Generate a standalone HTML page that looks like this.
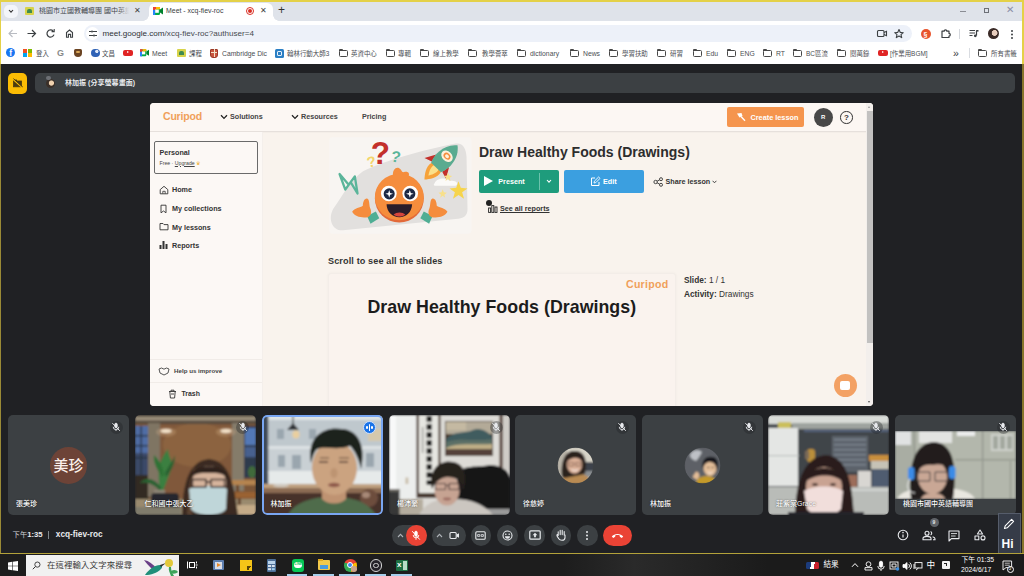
<!DOCTYPE html>
<html lang="zh-Hant">
<head>
<meta charset="utf-8">
<title>Meet - xcq-fiev-roc</title>
<style>
*{box-sizing:border-box;margin:0;padding:0}
html,body{width:1024px;height:576px;overflow:hidden;background:#202124}
body{position:relative;font-family:"Liberation Sans","Noto Sans CJK TC",sans-serif;color:#202124;-webkit-font-smoothing:antialiased}
.abs{position:absolute}
#tabstrip{left:0;top:0;width:1024px;height:21px;background:#dfe3ea}
#toolbar{left:0;top:21px;width:1024px;height:24px;background:#fff}
#bookmarks{left:0;top:45px;width:1024px;height:19px;background:#fff}
#meet{left:0;top:64px;width:1024px;height:490px;background:#202124}
#taskbar{left:0;top:554px;width:1024px;height:22px;background:#1c1c1c}
.yb{background:#e4d148}
.t{position:absolute;white-space:nowrap;line-height:1}
.bm{position:absolute;top:49px;font-size:6.8px;color:#4a4d52;white-space:nowrap;line-height:10px}
.folder{position:absolute;top:49.5px;width:9px;height:7px;border:1px solid #474747;border-radius:1.5px}
.folder:before{content:"";position:absolute;left:-1px;top:-2px;width:4px;height:2px;background:#474747;border-radius:1px 1px 0 0}
.nm{font-size:7px;color:#fff;font-weight:500;text-shadow:0 0 1.5px rgba(0,0,0,0.7)}
.cb{top:525px;width:20.5px;height:20.5px;border-radius:50%;background:#3c4043}
</style>
</head>
<body>
<!-- ===== browser chrome ===== -->
<div id="tabstrip" class="abs"></div>
<div id="toolbar" class="abs"></div>
<div id="bookmarks" class="abs"></div>
<div id="meet" class="abs"></div>
<div id="taskbar" class="abs"></div>


<!-- tab strip -->
<div class="abs" style="left:4px;top:5px;width:14px;height:13px;border-radius:5px;background:#f3f5f9"></div>
<svg class="abs" style="left:8px;top:9px" width="6" height="5" viewBox="0 0 6 5"><path d="M1 1 L3 3.2 L5 1" fill="none" stroke="#333" stroke-width="1.1"/></svg>
<div class="abs" style="left:25px;top:7px;width:9px;height:8px;background:#d7d34a;border-radius:1px"></div>
<div class="abs" style="left:27px;top:9px;width:5px;height:4px;background:#3f8a4f;border-radius:2px 2px 0 0"></div>
<div class="t" style="left:39px;top:7.3px;font-size:7px;color:#45484e;width:92px;overflow:hidden">桃園市立國教輔導團 國中英語科</div>
<div class="abs" style="left:118px;top:4px;width:14px;height:14px;background:linear-gradient(90deg,rgba(223,227,234,0),#dfe3ea 80%)"></div>
<div class="t" style="left:133.5px;top:6.5px;font-size:8px;color:#444">✕</div>
<div class="abs" style="left:149px;top:3px;width:124px;height:18px;background:#fff;border-radius:6px 6px 0 0"></div>
<div class="abs" style="left:143px;top:15px;width:6px;height:6px;background:radial-gradient(circle at 0 0,rgba(255,255,255,0) 5.5px,#fff 6px)"></div>
<div class="abs" style="left:273px;top:15px;width:6px;height:6px;background:radial-gradient(circle at 100% 0,rgba(255,255,255,0) 5.5px,#fff 6px)"></div>
<svg class="abs" style="left:153px;top:7px" width="10" height="8" viewBox="0 0 10 8"><rect x="0" y="0" width="7" height="8" rx="1.2" fill="#00ac47"/><rect x="0" y="0" width="3" height="3" fill="#ea4335"/><rect x="0" y="3" width="2.2" height="5" fill="#2684fc"/><rect x="2.2" y="2.4" width="3.6" height="3.4" fill="#fff"/><path d="M7 2.5 L10 0.6 V7.4 L7 5.5Z" fill="#00832d"/><rect x="3" y="0" width="4" height="2.4" fill="#ffba00"/></svg>
<div class="t" style="left:166px;top:7.5px;font-size:6.95px;color:#3b3e44">Meet - xcq-fiev-roc</div>
<div class="abs" style="left:246px;top:7px;width:8px;height:8px;border-radius:50%;border:1px solid #d93025"></div>
<div class="abs" style="left:248px;top:9px;width:4px;height:4px;border-radius:50%;background:#d93025"></div>
<div class="t" style="left:259.5px;top:6.5px;font-size:8px;color:#444">✕</div>
<div class="t" style="left:278px;top:4px;font-size:12px;color:#333">+</div>
<!-- window controls -->
<div class="abs" style="left:960px;top:11px;width:6px;height:1px;background:#8a8d94"></div>
<div class="abs" style="left:984px;top:8px;width:5px;height:5px;border:1px solid #6d7077"></div>
<div class="t" style="left:1006px;top:5px;font-size:10px;color:#8b8fa8">✕</div>

<!-- toolbar -->
<svg class="abs" style="left:6px;top:27px" width="140" height="13" viewBox="0 0 140 13">
 <g fill="none" stroke="#b9bcc2" stroke-width="1.1"><path d="M3 6.5 H11 M6.5 3 L3 6.5 L6.5 10"/></g>
 <g fill="none" stroke="#3c4043" stroke-width="1.2"><path d="M21.5 6.5 H29.5 M26 3 L29.5 6.5 L26 10"/>
 <path d="M47.2 4 A3.6 3.6 0 1 0 48 7.6"/><path d="M48.2 2 V4.6 H45.6" stroke-width="1.1"/>
 <path d="M60.5 10.3 V5.6 L63.5 3 L66.5 5.6 V10.3 H64.6 V7.4 H62.4 V10.3 Z" stroke-width="1.1"/></g>
</svg>
<div class="abs" style="left:84px;top:25px;width:828px;height:17px;border-radius:9px;background:#edf1f9"></div>
<div class="abs" style="left:86px;top:27px;width:13px;height:13px;border-radius:50%;background:#fff"></div>
<svg class="abs" style="left:89px;top:30px" width="8" height="7" viewBox="0 0 8 7"><g stroke="#3c4043" stroke-width="1.2" fill="none"><path d="M0 1.5 H2 M4 1.5 H8 M0 5.5 H4 M6 5.5 H8"/></g><circle cx="3" cy="1.5" r="1" fill="#3c4043"/><circle cx="5" cy="5.5" r="1" fill="#3c4043"/></svg>
<div class="t" style="left:102.5px;top:30.1px;font-size:8.1px;color:#2f3136">meet.google.com<span style="color:#474a50">/xcq-fiev-roc?authuser=4</span></div>
<svg class="abs" style="left:876px;top:28px" width="30" height="11" viewBox="0 0 30 11"><g fill="none" stroke="#3c4043" stroke-width="1.1"><rect x="1.5" y="2.5" width="6.5" height="6" rx="1"/><path d="M8 4.6 L10.5 3.3 V7.7 L8 6.4"/><path d="M23 1.6 L24.3 4.4 L27.3 4.7 L25 6.6 L25.7 9.6 L23 8 L20.3 9.6 L21 6.6 L18.7 4.7 L21.7 4.4 Z" stroke-linejoin="round"/></g></svg>
<div class="abs" style="left:921px;top:29px;width:10px;height:10px;border-radius:50%;background:#e8532c"></div>
<div class="t" style="left:923.5px;top:30.5px;font-size:7px;color:#fff;font-weight:bold">§</div>
<svg class="abs" style="left:940px;top:28px" width="11" height="11" viewBox="0 0 11 11"><path d="M2 3.2 H4.2 A1.3 1.3 0 1 1 6.8 3.2 H9 V5.4 A1.3 1.3 0 1 1 9 8 V9.5 H2 Z" fill="none" stroke="#3c4043" stroke-width="1.2" stroke-linejoin="round"/></svg>
<div class="abs" style="left:959px;top:29px;width:1px;height:10px;background:#d5d8dd"></div>
<svg class="abs" style="left:969px;top:29px" width="10" height="9" viewBox="0 0 10 9"><g stroke="#3c4043" stroke-width="1.2" fill="none"><path d="M0.5 1.5 H6 M0.5 4 H6 M0.5 6.5 H3.5 M7.5 1.2 V6.5"/></g><circle cx="6.3" cy="6.8" r="1.4" fill="#3c4043"/><path d="M7.5 1 H9.5 V2.6 H7.5Z" fill="#3c4043"/></svg>
<div class="abs" style="left:987.5px;top:28px;width:11px;height:11px;border-radius:50%;background:radial-gradient(circle at 60% 45%,#e8cdbd 0 2.6px,#3a2a26 3.2px)"></div>
<div class="abs" style="left:1011px;top:29.5px;width:2px;height:2px;border-radius:50%;background:#3c4043;box-shadow:0 3.5px 0 #3c4043,0 7px 0 #3c4043"></div>

<!-- bookmarks -->
<div class="abs" style="left:6px;top:48px;width:9px;height:9px;border-radius:50%;background:#1877f2"></div><div class="t" style="left:9.2px;top:49px;font-size:8.5px;font-weight:bold;color:#fff">f</div>
<div class="abs" style="left:23px;top:48.5px;width:4px;height:4px;background:#f25022"></div><div class="abs" style="left:27.5px;top:48.5px;width:4px;height:4px;background:#7fba00"></div><div class="abs" style="left:23px;top:53px;width:4px;height:4px;background:#00a4ef"></div><div class="abs" style="left:27.5px;top:53px;width:4px;height:4px;background:#ffb900"></div><div class="bm" style="left:36px;font-size:6.45px">登入</div>
<div class="t" style="left:57px;top:48.5px;font-size:9px;font-weight:bold;color:#8a8a8a">G</div>
<div class="abs" style="left:74px;top:49px;width:8px;height:8px;background:#6b4423;border-radius:1.5px 1.5px 4px 4px"></div><div class="abs" style="left:76px;top:51px;width:4px;height:2px;background:#d8a657;border-radius:1px"></div>
<div class="abs" style="left:91px;top:48.5px;width:8.5px;height:8.5px;border-radius:50%;background:radial-gradient(circle at 65% 30%,#dfe9f7 0 1.3px,#2f62b5 2px)"></div><div class="bm" style="left:102px;font-size:6.45px">文昌</div>
<div class="abs" style="left:123px;top:49.5px;width:9.5px;height:6.5px;border-radius:2px;background:#e02424"></div><div class="abs" style="left:126.7px;top:51.2px;width:0;height:0;border-left:2.6px solid #fff;border-top:1.6px solid transparent;border-bottom:1.6px solid transparent"></div>
<svg class="abs" style="left:140px;top:49px" width="9" height="7.5" viewBox="0 0 10 8"><rect x="0" y="0" width="7" height="8" rx="1.2" fill="#00ac47"/><rect x="0" y="0" width="3" height="3" fill="#ea4335"/><rect x="0" y="3" width="2.2" height="5" fill="#2684fc"/><rect x="2.2" y="2.4" width="3.6" height="3.4" fill="#fff"/><path d="M7 2.5 L10 0.6 V7.4 L7 5.5Z" fill="#00832d"/><rect x="3" y="0" width="4" height="2.4" fill="#ffba00"/></svg><div class="bm" style="left:152px">Meet</div>
<div class="abs" style="left:177px;top:49px;width:9px;height:8px;background:#d7d34a;border-radius:1px"></div><div class="abs" style="left:179px;top:51px;width:5px;height:4px;background:#3f8a4f;border-radius:2px 2px 0 0"></div><div class="bm" style="left:189px;font-size:6.45px">課程</div>
<div class="abs" style="left:210px;top:48.5px;width:8px;height:9px;background:#c8553d;border-radius:1px 1px 3px 3px;border:1px solid #9c3a28"></div><div class="abs" style="left:213.5px;top:49px;width:1px;height:8px;background:#f2e2c9"></div><div class="abs" style="left:211px;top:52px;width:6px;height:1px;background:#f2e2c9"></div><div class="bm" style="left:222px">Cambridge Dic</div>
<div class="abs" style="left:275px;top:48.5px;width:8.5px;height:9px;background:#2b7fc4;border-radius:1.5px"></div><div class="abs" style="left:277px;top:50.5px;width:4.5px;height:5px;border:1px solid #e4effa;border-radius:1px"></div><div class="bm" style="left:287px;font-size:6.45px">翰林行動大師3</div>
<div class="folder" style="left:339px"></div><div class="bm" style="left:351px;font-size:6.45px">英資中心</div>
<div class="folder" style="left:386px"></div><div class="bm" style="left:398px;font-size:6.45px">專輯</div>
<div class="folder" style="left:420px"></div><div class="bm" style="left:433px;font-size:6.45px">線上教學</div>
<div class="folder" style="left:468px"></div><div class="bm" style="left:482px;font-size:6.45px">教學薈萃</div>
<div class="folder" style="left:517px"></div><div class="bm" style="left:530px">dictionary</div>
<div class="folder" style="left:570px"></div><div class="bm" style="left:583px">News</div>
<div class="folder" style="left:609px"></div><div class="bm" style="left:622px;font-size:6.45px">學習扶助</div>
<div class="folder" style="left:657px"></div><div class="bm" style="left:670px;font-size:6.45px">研習</div>
<div class="folder" style="left:693px"></div><div class="bm" style="left:706px">Edu</div>
<div class="folder" style="left:727px"></div><div class="bm" style="left:740px">ENG</div>
<div class="folder" style="left:763px"></div><div class="bm" style="left:776px">RT</div>
<div class="folder" style="left:793px"></div><div class="bm" style="left:806px;font-size:6.45px">BC區流</div>
<div class="folder" style="left:837px"></div><div class="bm" style="left:850px;font-size:6.45px">閱萬錄</div>
<div class="abs" style="left:878px;top:49.5px;width:9.5px;height:6.5px;border-radius:2px;background:#e02424"></div><div class="abs" style="left:881.7px;top:51.2px;width:0;height:0;border-left:2.6px solid #fff;border-top:1.6px solid transparent;border-bottom:1.6px solid transparent"></div><div class="bm" style="left:890px;font-size:6.45px">[作業用BGM]</div>
<div class="folder" style="left:978px"></div><div class="bm" style="left:991px;font-size:6.45px">所有書籤</div>
<div class="t" style="left:953px;top:47.5px;font-size:10.5px;color:#3c4043">»</div>
<div class="abs" style="left:969px;top:48px;width:1px;height:10px;background:#d9dce1"></div>

<!-- ===== Meet top banner ===== -->
<div class="abs" style="left:8px;top:73px;width:19px;height:21px;border-radius:5px;background:#fbbc04"></div>
<svg class="abs" style="left:12px;top:78px" width="11" height="11" viewBox="0 0 11 11"><rect x="1.5" y="3" width="8" height="5.8" fill="#4a3a10" stroke="#4a3a10" stroke-width="0.8"/><path d="M1.2 3 H5 V1.6 H1.2Z" fill="#4a3a10"/><path d="M0.6 1 L10.4 9.8" stroke="#fbbc04" stroke-width="1.1"/><path d="M1.4 0.6 L10.8 9" stroke="#4a3a10" stroke-width="0.9"/></svg>
<div class="abs" style="left:35px;top:73px;width:980px;height:20px;border-radius:5px;background:#3c4043"></div>
<div class="abs" style="left:46px;top:79px;width:9px;height:9px;border-radius:50%;background:radial-gradient(circle at 60% 45%,#f0d2b0 0 2.2px,#3a2f28 3px)"></div>
<div class="abs" style="left:46px;top:76px;width:5px;height:4px;background:#6d7075;border-radius:2px"></div>
<div class="t" style="left:65px;top:79.2px;font-size:7.05px;font-weight:bold;color:#e8eaed">林加振 (分享螢幕畫面)</div>

<!-- ===== Shared screen: Curipod ===== -->
<div id="share" class="abs" style="left:150px;top:103px;width:723px;height:303px;background:#f9f3ed;border-radius:4px;overflow:hidden">
 <!-- coordinates inside are page coords minus (150,103) -->
 <div class="abs" style="left:0;top:0;width:723px;height:29.3px;background:#fcf7f3;border-bottom:1px solid #e6e0dc;box-shadow:0 0.5px 1.5px rgba(0,0,0,0.06)"></div>
 <div class="abs" style="left:0;top:29px;width:113.2px;height:274px;background:#fcf8f5;border-right:1px solid #f4efeb"></div>
 <!-- logo -->
 <div class="t" style="left:13px;top:8px;font-size:10.5px;font-weight:bold;color:#f0a05a;letter-spacing:-0.2px">Curipod</div>
 <!-- nav -->
 <svg class="abs" style="left:70px;top:11px" width="8" height="6" viewBox="0 0 8 6"><path d="M1 1.2 L4 4.4 L7 1.2" fill="none" stroke="#222" stroke-width="1.3"/></svg>
 <div class="t" style="left:80px;top:10px;font-size:7.2px;font-weight:bold;color:#444">Solutions</div>
 <svg class="abs" style="left:140.5px;top:11px" width="8" height="6" viewBox="0 0 8 6"><path d="M1 1.2 L4 4.4 L7 1.2" fill="none" stroke="#222" stroke-width="1.3"/></svg>
 <div class="t" style="left:151px;top:10px;font-size:7.2px;font-weight:bold;color:#444">Resources</div>
 <div class="t" style="left:212px;top:10px;font-size:7.2px;font-weight:bold;color:#444">Pricing</div>
 <!-- create lesson -->
 <div class="abs" style="left:577px;top:4px;width:77px;height:20px;border-radius:2px;background:#f5954e"></div>
 <svg class="abs" style="left:586px;top:9px" width="10" height="10" viewBox="0 0 10 10"><path d="M1 1.5 L5.5 1 L6.5 4 L3.5 5.5 Z" fill="#fff"/><path d="M5 4.5 L9 8.8" stroke="#fff" stroke-width="1.3"/></svg>
 <div class="t" style="left:600.5px;top:10.5px;font-size:7.3px;font-weight:bold;color:#fff">Create lesson</div>
 <div class="abs" style="left:664px;top:5px;width:19px;height:19px;border-radius:50%;background:#484848"></div>
 <div class="t" style="left:671px;top:10.6px;font-size:6px;font-weight:bold;color:#fff">R</div>
 <div class="abs" style="left:690px;top:8px;width:12.5px;height:12.5px;border-radius:50%;border:1px solid #333"></div>
 <div class="t" style="left:694px;top:10.5px;font-size:8px;font-weight:bold;color:#333">?</div>
 <!-- scrollbar -->
 <div class="abs" style="left:716px;top:0;width:7px;height:303px;background:#f3efec"></div>
 <div class="abs" style="left:716.5px;top:8px;width:6px;height:232px;background:#c2c1c0"></div>
 <div class="abs" style="left:718px;top:3px;width:0;height:0;border-left:1.8px solid transparent;border-right:1.8px solid transparent;border-bottom:2.2px solid #999"></div>
 <div class="abs" style="left:718px;top:298px;width:0;height:0;border-left:1.8px solid transparent;border-right:1.8px solid transparent;border-top:2.2px solid #555"></div>

 <!-- sidebar -->
 <div class="abs" style="left:4px;top:37.5px;width:104px;height:33px;border:1px solid #6a6a6a;border-radius:2px"></div>
 <div class="t" style="left:9.5px;top:45.5px;font-size:7.2px;font-weight:bold;color:#333">Personal</div>
 <div class="t" style="left:9.5px;top:57.5px;font-size:5.2px;color:#444">Free · <span style="text-decoration:underline">Upgrade</span> <span style="color:#f0b23a">♛</span></div>
 <svg class="abs" style="left:8.5px;top:81.5px" width="10" height="10" viewBox="0 0 10 10"><path d="M1.2 4.6 L5 1.3 L8.8 4.6 V8.8 H1.2 Z" fill="none" stroke="#333" stroke-width="0.9" stroke-linejoin="round"/><path d="M3.8 8.6 V6.3 H6.2 V8.6" fill="none" stroke="#333" stroke-width="0.8"/></svg>
 <div class="t" style="left:22px;top:83px;font-size:7.2px;font-weight:bold;color:#333">Home</div>
 <svg class="abs" style="left:9px;top:100.5px" width="9" height="10" viewBox="0 0 9 10"><path d="M2 1.2 H7 V8.8 L4.5 7 L2 8.8 Z" fill="none" stroke="#333" stroke-width="0.9" stroke-linejoin="round"/></svg>
 <div class="t" style="left:22px;top:102px;font-size:7.2px;font-weight:bold;color:#333">My collections</div>
 <svg class="abs" style="left:8.5px;top:119px" width="10" height="9" viewBox="0 0 10 9"><path d="M1 1.5 H4 L5 2.6 H9 V7.8 H1 Z" fill="none" stroke="#333" stroke-width="0.9" stroke-linejoin="round"/></svg>
 <div class="t" style="left:22px;top:120.5px;font-size:7.2px;font-weight:bold;color:#333">My lessons</div>
 <svg class="abs" style="left:9px;top:137px" width="9" height="10" viewBox="0 0 9 10"><g fill="#333"><rect x="0.5" y="5" width="2" height="4"/><rect x="3.5" y="1" width="2" height="8"/><rect x="6.5" y="4" width="2" height="5"/></g></svg>
 <div class="t" style="left:22px;top:139px;font-size:7.2px;font-weight:bold;color:#333">Reports</div>
 <div class="abs" style="left:0;top:256px;width:112px;height:1px;background:#f1ece8"></div>
 <div class="abs" style="left:0;top:279px;width:112px;height:1px;background:#f1ece8"></div>
 <svg class="abs" style="left:8px;top:264px" width="12" height="9" viewBox="0 0 12 9"><path d="M1 2 L3.5 1 L6 2.2 L8.5 1 L11 2 L10 6 L6 8 L2 6 Z" fill="none" stroke="#444" stroke-width="0.9" stroke-linejoin="round"/></svg>
 <div class="t" style="left:24px;top:265.3px;font-size:6.2px;font-weight:bold;color:#444">Help us improve</div>
 <svg class="abs" style="left:18px;top:286px" width="9" height="10" viewBox="0 0 9 10"><path d="M1 2.5 H8 M3 2.5 V1.2 H6 V2.5 M1.8 2.5 L2.4 9 H6.6 L7.2 2.5 M3 5 H6" fill="none" stroke="#333" stroke-width="0.9"/></svg>
 <div class="t" style="left:31.5px;top:288.3px;font-size:6.9px;font-weight:bold;color:#333">Trash</div>


 <!-- mascot illustration (real "?" glyphs are text) -->
 <svg class="abs" style="left:172px;top:29px" width="160" height="110" viewBox="0 0 838 576">
  <rect x="38" y="28" width="745" height="505" rx="18" fill="#f8f5f2"/>
  <path d="M60 400 C110 330 150 250 215 205 C330 150 520 95 700 60 C740 55 755 90 757 130 L762 400 C764 440 740 452 700 456 L110 515 C50 518 30 450 60 400Z" fill="#e2e0de"/>
  <!-- lightning -->
  <path d="M92 220 L122 302 L150 262 L186 322 L172 232 L140 276 Z" fill="none" stroke="#5bb59a" stroke-width="12" stroke-linejoin="round"/>
  <!-- question marks -->
  <text x="255" y="165" font-family="Liberation Sans, sans-serif" font-weight="bold" font-size="165" fill="#c3302b">?</text>
  <text x="236" y="185" font-family="Liberation Sans, sans-serif" font-weight="bold" font-size="78" fill="#f3d56b" transform="rotate(-12 250 160)">?</text>
  <text x="362" y="158" font-family="Liberation Sans, sans-serif" font-weight="bold" font-size="82" fill="#5bb59a" transform="rotate(10 385 130)">?</text>
  <!-- rocket -->
  <g transform="translate(14 8) rotate(44 630 130) translate(630 130) scale(1.12 0.86) translate(-630 -130)">
   <path d="M600 205 C590 250 615 285 630 310 C645 285 670 250 660 205Z" fill="#f6a23a"/>
   <path d="M615 205 C610 235 622 258 630 275 C638 258 650 235 645 205Z" fill="#fbe08a"/>
   <path d="M588 150 L560 215 L596 200Z M672 150 L700 215 L664 200Z" fill="#c3302b"/>
   <path d="M630 20 C680 70 680 160 662 208 H598 C580 160 580 70 630 20Z" fill="#5aab90"/>
   <circle cx="630" cy="112" r="30" fill="#fdf0dc"/>
   <circle cx="630" cy="112" r="14" fill="none" stroke="#f58d3d" stroke-width="8"/>
  </g>
  <!-- cloud & stars -->
  <path d="M590 268 C600 240 650 236 668 256 C700 250 720 268 700 282 H600 C585 282 582 274 590 268Z" fill="#fbfaf8"/>
  <path d="M715 258 L727 292 L762 296 L734 316 L744 350 L715 330 L686 350 L696 316 L668 296 L703 292Z" fill="#f6d44c"/>
  <path d="M660 212 L666 228 L682 230 L669 240 L673 256 L660 246 L647 256 L651 240 L638 230 L654 228Z" fill="#f8e08a"/>
  <path d="M632 300 L638 316 L654 318 L641 328 L645 344 L632 334 L619 344 L623 328 L610 318 L626 316Z" fill="#f8e08a"/>
  <!-- hands -->
  <path d="M236 440 L282 416 L300 452 L254 480 Z" fill="#4fae94"/>
  <path d="M158 418 C170 396 200 398 214 386 C214 366 222 346 236 348 C250 352 246 380 252 398 C262 420 258 440 240 446 C210 452 170 444 158 418Z" fill="#f58d3d"/>
  <path d="M579 440 L533 416 L515 452 L561 480 Z" fill="#4fae94"/>
  <path d="M657 418 C645 396 615 398 601 386 C601 366 593 346 579 348 C565 352 569 380 563 398 C553 420 557 440 575 446 C605 452 645 444 657 418Z" fill="#f58d3d"/>
  <!-- head -->
  <path d="M372 228 C368 200 388 180 404 190 C418 196 416 214 430 210 C452 204 462 218 452 234 Z" fill="#f58d3d"/>
  <ellipse cx="405" cy="348" rx="128" ry="126" fill="#e36a3a"/>
  <ellipse cx="405" cy="340" rx="128" ry="122" fill="#f58d3d"/>
  <circle cx="350" cy="322" r="41" fill="#fff"/><circle cx="462" cy="322" r="41" fill="#fff"/>
  <circle cx="352" cy="324" r="29" fill="#1e2944"/><circle cx="460" cy="324" r="29" fill="#1e2944"/>
  <path d="M352 304 L357 319 L372 324 L357 329 L352 344 L347 329 L332 324 L347 319Z M460 304 L465 319 L480 324 L465 329 L460 344 L455 329 L440 324 L455 319Z" fill="#fff"/>
  <path d="M338 378 H472 C470 420 440 446 405 446 C370 446 340 420 338 378Z" fill="#2a1d2a"/>
  <path d="M375 432 C390 418 422 418 436 432 C420 446 392 446 375 432Z" fill="#d6453c"/>
 </svg>
 <!-- lesson header -->
 <div class="t" style="left:329px;top:41.6px;font-size:14px;font-weight:bold;color:#2d2d2d">Draw Healthy Foods (Drawings)</div>
 <div class="abs" style="left:329px;top:67px;width:80px;height:22.5px;border-radius:2px;background:#1e9c7c"></div>
 <div class="abs" style="left:388.5px;top:69.5px;width:1px;height:17px;background:#6cc2ac"></div>
 <div class="abs" style="left:334px;top:72.9px;width:0;height:0;border-left:9.5px solid #fff;border-top:5.4px solid transparent;border-bottom:5.4px solid transparent"></div>
 <div class="t" style="left:348.3px;top:74.5px;font-size:7.2px;font-weight:bold;color:#fff">Present</div>
 <svg class="abs" style="left:396px;top:76px" width="6" height="5" viewBox="0 0 6 5"><path d="M1 1 L3 3.2 L5 1" fill="none" stroke="#fff" stroke-width="1.1"/></svg>
 <div class="abs" style="left:414px;top:67px;width:80px;height:22.5px;border-radius:2px;background:#3b9fe0"></div>
 <svg class="abs" style="left:440px;top:73px" width="11" height="11" viewBox="0 0 11 11"><path d="M5 2 H1.5 V9.5 H9 V6" fill="none" stroke="#fff" stroke-width="1"/><path d="M4 7 L4.4 5.2 L8.6 1 L10 2.4 L5.8 6.6 Z" fill="none" stroke="#fff" stroke-width="0.9"/></svg>
 <div class="t" style="left:453px;top:74.5px;font-size:7.2px;font-weight:bold;color:#fff">Edit</div>
 <svg class="abs" style="left:503px;top:73.5px" width="11" height="10" viewBox="0 0 11 10"><g fill="none" stroke="#333" stroke-width="0.9"><circle cx="2.6" cy="5" r="1.7"/><circle cx="8" cy="2.2" r="1.5"/><circle cx="8" cy="7.8" r="1.5"/><path d="M4.1 4.2 L6.6 2.9 M4.1 5.8 L6.6 7.1"/></g></svg>
 <div class="t" style="left:515.5px;top:74.5px;font-size:7.2px;font-weight:bold;color:#333">Share lesson</div>
 <svg class="abs" style="left:562.3px;top:76.5px" width="5" height="4" viewBox="0 0 5 4"><path d="M0.6 0.8 L2.5 2.8 L4.4 0.8" fill="none" stroke="#333" stroke-width="0.9"/></svg>
 <div class="abs" style="left:336px;top:96.5px;width:6px;height:6px;border-radius:50%;background:#222"></div>
 <svg class="abs" style="left:338px;top:102px" width="10" height="8" viewBox="0 0 10 8"><g fill="none" stroke="#222" stroke-width="0.9"><rect x="0.6" y="3" width="2" height="4.4"/><rect x="3.8" y="0.6" width="2" height="6.8"/><rect x="7" y="2" width="2" height="5.4"/></g></svg>
 <div class="t" style="left:350px;top:102.3px;font-size:7.2px;font-weight:bold;color:#333;text-decoration:underline">See all reports</div>

 <!-- slides -->
 <div class="t" style="left:178px;top:153.8px;font-size:9.1px;letter-spacing:0.12px;font-weight:bold;color:#333">Scroll to see all the slides</div>
 <div class="abs" style="left:178px;top:170px;width:348px;height:140px;background:#faf3ee;border:1px solid #f3ede8;border-radius:3px;box-shadow:0 0 3px rgba(0,0,0,0.04)"></div>
 <div class="t" style="left:217.5px;top:196px;font-size:17.8px;letter-spacing:0.03px;font-weight:bold;color:#1c1c1c">Draw Healthy Foods (Drawings)</div>
 <div class="t" style="left:476px;top:175.5px;font-size:10.6px;font-weight:bold;color:#f0a05a;letter-spacing:0.25px">Curipod</div>
 <div class="t" style="left:534px;top:173.2px;font-size:8.3px;color:#333"><b>Slide:</b> 1 / 1</div>
 <div class="t" style="left:534px;top:187px;font-size:8.3px;color:#333"><b>Activity:</b> Drawings</div>
 <!-- chat bubble -->
 <div class="abs" style="left:683.5px;top:271px;width:23px;height:23px;border-radius:50%;background:#f3a164"></div>
 <div class="abs" style="left:690px;top:277.5px;width:10px;height:9px;border-radius:2px;background:#fff"></div>
</div>

<!-- ===== participants strip ===== -->
<svg width="0" height="0" style="position:absolute"><defs>
 <filter id="b1" x="-5%" y="-5%" width="110%" height="110%"><feGaussianBlur stdDeviation="0.9"/></filter>
 <filter id="b2" x="-5%" y="-5%" width="110%" height="110%"><feGaussianBlur stdDeviation="1.6"/></filter>
</defs></svg>

<!-- tile 1 -->
<div class="abs" style="left:8px;top:415px;width:121px;height:100px;border-radius:5px;background:#3c4043"></div>
<div class="abs" style="left:50px;top:447.3px;width:36.8px;height:36.8px;border-radius:50%;background:#6d4337"></div>
<div class="t" style="left:53.4px;top:458.3px;font-size:15px;font-weight:500;color:#fbefea">美珍</div>
<div class="t nm" style="left:16px;top:500.4px">張美珍</div>
<div class="abs" style="left:109.5px;top:420.5px;width:13px;height:13px;border-radius:50%;background:rgba(32,33,36,0.35)"></div><svg class="abs" style="left:111px;top:422px" width="10" height="10" viewBox="0 0 10 10"><g fill="none" stroke="#e8eaed" stroke-width="0.9"><rect x="3.8" y="1.2" width="2.4" height="4.6" rx="1.2" fill="#e8eaed"/><path d="M2.2 4.8 A2.8 2.8 0 0 0 7.8 4.8 M5 7.6 V9"/><path d="M1.4 1.2 L8.8 8.8" stroke-width="1"/></g></svg>

<!-- tile 2 : cafe -->
<svg class="abs" style="left:135px;top:415px;border-radius:5px" width="121" height="100" viewBox="0 0 121 100">
 <g filter="url(#b1)">
 <rect width="121" height="100" fill="#7c5638"/>
 <rect x="25" y="8" width="72" height="78" fill="#80583a"/>
 <ellipse cx="62" cy="30" rx="34" ry="22" fill="#8f6644" opacity="0.8"/>
 <rect x="0" y="0" width="121" height="9" fill="#6e6252"/>
 <rect x="0" y="2.5" width="121" height="2.2" fill="#a99d88"/>
 <rect x="0" y="7" width="121" height="1.6" fill="#4a4036"/>
 <rect x="0" y="11" width="13" height="50" fill="#4f6da4"/>
 <rect x="0" y="38" width="13" height="23" fill="#3b4a68"/>
 <rect x="0" y="20" width="13" height="1.4" fill="#27303f"/><rect x="0" y="30" width="13" height="1.4" fill="#27303f"/><rect x="0" y="42" width="13" height="1.4" fill="#27303f"/><rect x="5.5" y="11" width="1.4" height="50" fill="#27303f"/>
 <rect x="0" y="60" width="14" height="28" fill="#332c24"/>
 <rect x="13" y="8" width="12" height="74" fill="#7f7564"/>
 <rect x="97" y="8" width="12" height="68" fill="#857b6b"/>
 <rect x="109" y="11" width="12" height="52" fill="#2f3b4e"/>
 <rect x="110" y="13" width="11" height="17" fill="#5378b6"/>
 <rect x="110" y="32" width="11" height="10" fill="#46608e"/>
 <ellipse cx="117" cy="57" rx="4" ry="6" fill="#3f6b3a"/>
 <ellipse cx="31" cy="16" rx="5.5" ry="1.9" fill="#fff8e6"/><ellipse cx="91" cy="16" rx="5.5" ry="1.9" fill="#fff8e6"/>
 <ellipse cx="31" cy="17" rx="10" ry="4.5" fill="#d9b48a" opacity="0.3"/><ellipse cx="91" cy="17" rx="10" ry="4.5" fill="#d9b48a" opacity="0.3"/>
 <path d="M25 76 C23 58 22 48 33 34 C34 44 37 42 36 52 C38 50 33 64 28 76Z" fill="#3a7f40"/>
 <path d="M26 72 C18 62 10 62 5 68 C13 66 20 70 25 76Z" fill="#2a6231"/>
 <path d="M27 62 C22 54 18 48 19 40 C25 46 28 52 29 60Z" fill="#2f7236"/>
 <path d="M30 58 C34 50 38 46 40 40 C40 50 36 56 31 62Z" fill="#2a6231"/>
 <rect x="19" y="75" width="11" height="7" fill="#8e8576"/>
 <rect x="0" y="84" width="121" height="16" fill="#9a8a6e"/>
 <rect x="97" y="65" width="24" height="5" fill="#b5844f"/>
 <rect x="101" y="70" width="3" height="8" fill="#6a4526"/>
 <rect x="100" y="77" width="21" height="6" fill="#9a6232"/><rect x="103" y="83" width="2.6" height="9" fill="#5a3820"/>
 <rect x="98" y="90" width="23" height="10" fill="#c4ab88"/>
 <rect x="16" y="78" width="28" height="18" rx="4" fill="#25272e"/>
 <rect x="0" y="92" width="46" height="8" fill="#807c6c"/>
 <!-- person -->
 <path d="M47 100 C48 72 52 46 74 44 C96 46 99 72 103 100Z" fill="#3a2921"/>
 <path d="M52 100 C53 76 56 56 60 52 L57 100Z" fill="#5a4232"/>
 <ellipse cx="74" cy="68" rx="17" ry="17" fill="#d6b49c"/>
 <path d="M55 64 C55 47 93 47 93 64 C88 58 84 58 74 58 C64 58 60 58 55 64Z" fill="#2f201a"/>
 <path d="M54 74 C62 70 86 70 92 74 L91 94 C86 102 62 102 56 94Z" fill="#bfd6d9"/>
 <path d="M57.5 64.5 h13.5 v7.5 h-13.5z M76 64.5 h13.5 v7.5 h-13.5z M71 67 h5" fill="none" stroke="#2e2424" stroke-width="1.3"/>
 </g>
</svg>
<div class="t nm" style="left:144.5px;top:500.4px">仁和國中張大乙</div>
<div class="abs" style="left:236.0px;top:420.5px;width:13px;height:13px;border-radius:50%;background:rgba(32,33,36,0.35)"></div><svg class="abs" style="left:237.5px;top:422px" width="10" height="10" viewBox="0 0 10 10"><g fill="none" stroke="#e8eaed" stroke-width="0.9"><rect x="3.8" y="1.2" width="2.4" height="4.6" rx="1.2" fill="#e8eaed"/><path d="M2.2 4.8 A2.8 2.8 0 0 0 7.8 4.8 M5 7.6 V9"/><path d="M1.4 1.2 L8.8 8.8" stroke-width="1"/></g></svg>

<!-- tile 3 : speaker -->
<svg class="abs" style="left:262px;top:415px;border-radius:5px" width="121" height="100" viewBox="0 0 121 100">
 <g filter="url(#b1)">
 <rect width="121" height="100" fill="#d0d6d9"/>
 <rect x="0" y="0" width="6.5" height="100" fill="#3e4a58"/>
 <rect x="6.5" y="0" width="115" height="5" fill="#dfe4e6"/>
 <rect x="6.5" y="5" width="115" height="26" fill="#bfc8cd"/>
 <rect x="6.5" y="31" width="115" height="3" fill="#dde2e4"/>
 <rect x="6.5" y="34" width="115" height="24" fill="#c9d0d4"/>
 <rect x="6.5" y="56" width="115" height="13" fill="#e6eaea"/>
 <g fill="#9aa6ae"><rect x="15" y="14" width="7" height="10"/><rect x="47" y="14" width="7" height="10"/><rect x="16" y="40" width="7" height="12"/><rect x="30" y="40" width="9" height="14"/><rect x="104" y="38" width="8" height="14"/></g>
 <rect x="106" y="14" width="15" height="12" fill="#d5c8ac"/>
 <rect x="30.5" y="0" width="1" height="10" fill="#333"/><path d="M25 15 L31 8 L37 15Z" fill="#2e3134"/><ellipse cx="34" cy="19.5" rx="3.6" ry="4" fill="#e9cf9f"/>
 <rect x="0" y="69" width="121" height="4" fill="#bfa080"/>
 <rect x="0" y="73" width="121" height="5" fill="#8c6c52"/>
 <rect x="0" y="78" width="121" height="22" fill="#47332a"/>
 <ellipse cx="19" cy="70.5" rx="8" ry="1.8" fill="#cfc8be"/>
 <ellipse cx="107" cy="83" rx="9" ry="9" fill="#6d4d3e"/>
 <ellipse cx="104" cy="80" rx="4" ry="3" fill="#a88a78"/>
 <!-- person -->
 <path d="M26 100 C32 88 50 81 72 82 C96 82 108 90 114 100Z" fill="#4f6c4b"/>
 <path d="M60 68 H84 V84 C78 90 66 90 60 84Z" fill="#bf9372"/>
 <ellipse cx="72.5" cy="53" rx="22.5" ry="27" fill="#cba380"/>
 <path d="M49 48 C44 20 64 11 80 14 C97 15 104 32 99 54 C97 44 93 36 88 31 C76 36 60 30 54 35 C51 39 50 44 49 48Z" fill="#1d211e"/>
 <path d="M57 47 h9 M77 47 h9" stroke="#5b4536" stroke-width="1.6"/>
 <path d="M58 43 h9 M77 43 h10" stroke="#3a2c24" stroke-width="1.2" opacity="0.7"/>
 <ellipse cx="72" cy="70" rx="6" ry="2.2" fill="#8f5a4c"/>
 <ellipse cx="72" cy="58" rx="3.5" ry="5" fill="#bd9472"/>
 </g>
 <rect x="1" y="1" width="119" height="98" rx="4" fill="none" stroke="#79a6f2" stroke-width="2"/>
</svg>
<div class="abs" style="left:362.7px;top:421px;width:13px;height:13px;border-radius:50%;background:#1a73e8;border:0.6px solid #cfe0fb"></div>
<div class="abs" style="left:366px;top:425.5px;width:1.6px;height:3.6px;border-radius:1px;background:#fff"></div>
<div class="abs" style="left:368.5px;top:423.8px;width:1.6px;height:7px;border-radius:1px;background:#fff"></div>
<div class="abs" style="left:371px;top:425.5px;width:1.6px;height:3.6px;border-radius:1px;background:#fff"></div>
<div class="t nm" style="left:270.5px;top:500.4px">林加振</div>

<!-- tile 4 : office w/ calligraphy -->
<svg class="abs" style="left:389px;top:415px;border-radius:5px" width="121" height="100" viewBox="0 0 121 100">
 <g filter="url(#b1)">
 <rect width="121" height="100" fill="#dddbd7"/>
 <rect x="0" y="0" width="28" height="100" fill="#eceeed"/>
 <rect x="0" y="0" width="7" height="76" fill="#f8f9f9"/>
 <rect x="27.5" y="0" width="24" height="83" fill="#4a3a31"/>
 <rect x="29.8" y="0" width="19.6" height="78" fill="#e6e6e1"/>
 <g fill="#222"><rect x="37.5" y="1" width="5.5" height="6" rx="1"/><rect x="37.5" y="9" width="5.5" height="6" rx="1"/><rect x="37.5" y="17" width="5.5" height="6" rx="1"/><rect x="37.5" y="25" width="5.5" height="6" rx="1"/><rect x="37.5" y="33" width="5.5" height="6" rx="1"/><rect x="37.5" y="41" width="5.5" height="6" rx="1"/><rect x="37.5" y="49" width="5.5" height="6" rx="1"/><rect x="37.5" y="57" width="5.5" height="6" rx="1"/><rect x="37.5" y="65" width="5.5" height="5" rx="1"/></g>
 <rect x="33" y="12" width="1.2" height="26" fill="#8a8a86"/>
 <rect x="56" y="6" width="48" height="35" fill="#4d3c32"/>
 <rect x="57" y="7" width="46" height="12" fill="#b3aa98"/>
 <rect x="57" y="7" width="20" height="8" fill="#c4b9a2"/>
 <path d="M57 24 C66 15 76 19 84 15 C92 12 98 17 103 21 V32 H57Z" fill="#3f5b5e"/>
 <path d="M57 27 C70 22 90 27 103 24 V33 H57Z" fill="#5b6f66"/>
 <path d="M62 31 C74 28 92 30 103 29 V34 H57 V33Z" fill="#bfae86"/>
 <rect x="57" y="34" width="46" height="6" fill="#54423a"/>
 <rect x="110.5" y="0" width="3.2" height="56" fill="#56423a"/>
 <rect x="114" y="0" width="7" height="56" fill="#cfccc7"/>
 <rect x="16.5" y="62.5" width="2.8" height="6.5" fill="#c9bda8"/>
 <rect x="10" y="84" width="24" height="16" fill="#b5ad9f"/>
 <rect x="0" y="74" width="10.5" height="26" fill="#383838"/><rect x="0" y="74" width="10.5" height="2.6" fill="#6f6b64"/>
 <path d="M68 62 C70 48 92 53 100 50 C112 50 121 56 121 64 V95 H68Z" fill="#121318"/>
 <rect x="96" y="94" width="25" height="6" fill="#9a9a9a"/>
 <path d="M30 100 C36 88 48 83 62 84 C82 83 96 90 104 100Z" fill="#cbc6c0"/>
 <ellipse cx="58" cy="75" rx="12.5" ry="15.5" fill="#c6a392"/>
 <path d="M43 74 C38 52 54 44 64 47 C78 49 78 66 74 76 C72 66 68 62 58 62 C50 63 46 68 43 74Z" fill="#28201e"/>
 <path d="M46.5 68.5 h10 v6 h-10z M60 68.5 h10 v6 h-10z M56.5 70.5 h3.5" fill="none" stroke="#3f3230" stroke-width="1"/>
 <ellipse cx="58" cy="84" rx="4" ry="1.4" fill="#9c6a60"/>
 </g>
</svg>
<div class="t nm" style="left:397px;top:500.4px">楊沛縈</div>
<div class="abs" style="left:489.5px;top:420.5px;width:13px;height:13px;border-radius:50%;background:rgba(32,33,36,0.35)"></div><svg class="abs" style="left:491px;top:422px" width="10" height="10" viewBox="0 0 10 10"><g fill="none" stroke="#e8eaed" stroke-width="0.9"><rect x="3.8" y="1.2" width="2.4" height="4.6" rx="1.2" fill="#e8eaed"/><path d="M2.2 4.8 A2.8 2.8 0 0 0 7.8 4.8 M5 7.6 V9"/><path d="M1.4 1.2 L8.8 8.8" stroke-width="1"/></g></svg>

<!-- tile 5 -->
<div class="abs" style="left:515px;top:415px;width:121px;height:100px;border-radius:5px;background:#3c4043"></div>
<svg class="abs" style="left:557px;top:446.5px" width="37" height="37" viewBox="0 0 37 37"><defs><clipPath id="c5"><circle cx="18.5" cy="18.5" r="17.8"/></clipPath></defs><g clip-path="url(#c5)" filter="url(#b1)"><rect width="37" height="37" fill="#d8d4c8"/><rect x="0" y="0" width="10" height="37" fill="#b9b4a8"/><rect x="27" y="15" width="10" height="9" fill="#3c434b"/><rect x="27" y="24" width="10" height="6" fill="#8b8f92"/><path d="M3 37 C5 29 11 26 18 26 C28 26 33 30 35 37Z" fill="#b98b52"/><path d="M5 30 C3 10 11 3 18 4 C27 4 31 12 28 27 L8 31Z" fill="#2b201c"/><ellipse cx="17.5" cy="17.5" rx="7.6" ry="9.3" fill="#dcb198"/><path d="M9 16 C9 8 14 6 18 7 C23 7 26 10 26 15 C23 11 19 10 16 11 C12 12 10 14 9 16Z" fill="#2b201c"/><path d="M11.5 15.5 h5 v3.4 h-5z M18.8 15.5 h5 v3.4 h-5z" fill="none" stroke="#6b4a3c" stroke-width="0.7"/><path d="M14.5 22.5 C16.5 24 19 24 21 22.5" fill="none" stroke="#fff" stroke-width="0.9"/></g></svg>
<div class="t nm" style="left:523px;top:500.4px">徐慈婷</div>
<div class="abs" style="left:615.5px;top:420.5px;width:13px;height:13px;border-radius:50%;background:rgba(32,33,36,0.35)"></div><svg class="abs" style="left:617px;top:422px" width="10" height="10" viewBox="0 0 10 10"><g fill="none" stroke="#e8eaed" stroke-width="0.9"><rect x="3.8" y="1.2" width="2.4" height="4.6" rx="1.2" fill="#e8eaed"/><path d="M2.2 4.8 A2.8 2.8 0 0 0 7.8 4.8 M5 7.6 V9"/><path d="M1.4 1.2 L8.8 8.8" stroke-width="1"/></g></svg>

<!-- tile 6 -->
<div class="abs" style="left:642px;top:415px;width:121px;height:100px;border-radius:5px;background:#3c4043"></div>
<svg class="abs" style="left:684px;top:446.8px" width="37" height="37" viewBox="0 0 37 37"><defs><clipPath id="c6"><circle cx="18.5" cy="18.5" r="17.8"/></clipPath></defs><g clip-path="url(#c6)" filter="url(#b1)"><rect width="37" height="37" fill="#5d6166"/><path d="M6 8 C8 3 14 2 18 5 C16 9 14 12 12 14 C9 13 6 11 6 8Z" fill="#c9ccd0" opacity="0.9"/><path d="M12 37 C12 31 17 29 23 29 C29 29 33 32 33 37Z" fill="#c49a2c"/><ellipse cx="26" cy="21.5" rx="6.4" ry="7.6" fill="#e3bd98"/><path d="M18.5 22 C17 11 24 9 28 10 C34 10 35 17 33 23 C32 18 30 15 26 15 C22 15 20 17 18.500 22Z" fill="#17161a"/><path d="M23 20.5 h2.4 M27.6 20.5 h2.4" stroke="#2a1f1c" stroke-width="0.9"/><path d="M23.6 25 C25 26.4 27 26.4 28.6 25" fill="none" stroke="#fff" stroke-width="0.8"/><path d="M8.5 30 L12 24.5 L14.4 25.6 L15.6 29 L13 33Z" fill="#e3bd98"/></g></svg>
<div class="t nm" style="left:650px;top:500.4px">林加振</div>
<div class="abs" style="left:742.5px;top:420.5px;width:13px;height:13px;border-radius:50%;background:rgba(32,33,36,0.35)"></div><svg class="abs" style="left:744px;top:422px" width="10" height="10" viewBox="0 0 10 10"><g fill="none" stroke="#e8eaed" stroke-width="0.9"><rect x="3.8" y="1.2" width="2.4" height="4.6" rx="1.2" fill="#e8eaed"/><path d="M2.2 4.8 A2.8 2.8 0 0 0 7.8 4.8 M5 7.6 V9"/><path d="M1.4 1.2 L8.8 8.8" stroke-width="1"/></g></svg>

<!-- tile 7 : office w/ mask -->
<svg class="abs" style="left:768px;top:415px;border-radius:5px" width="121" height="100" viewBox="0 0 121 100">
 <g filter="url(#b1)">
 <rect width="121" height="100" fill="#40454b"/>
 <rect x="0" y="0" width="121" height="9" fill="#d9dcd8"/>
 <rect x="24" y="8" width="97" height="6" fill="#9ea39f"/>
 <rect x="10" y="7" width="13" height="7" fill="#cbbf5c"/>
 <rect x="0" y="13" width="30" height="58" fill="#e4e6e4"/>
 <rect x="0" y="40" width="31" height="1.2" fill="#bfc2c0"/>
 <rect x="31" y="14" width="90" height="58" fill="#3f444a"/><rect x="36" y="15" width="85" height="1.6" fill="#5b6c8a"/>
 <rect x="64" y="21" width="36" height="36" fill="#5b626b"/>
 <g fill="#7f8791"><rect x="66" y="24" width="32" height="1.4"/><rect x="66" y="29" width="32" height="1.4"/><rect x="66" y="34" width="32" height="1.4"/><rect x="66" y="39" width="32" height="1.4"/><rect x="66" y="44" width="32" height="1.4"/><rect x="66" y="49" width="32" height="1.4"/></g>
 <rect x="101" y="40" width="20" height="6" fill="#c98f3c"/><rect x="103" y="46" width="18" height="8" fill="#c6c2b6"/>
 <rect x="104" y="54" width="17" height="18" fill="#505c70"/>
 <rect x="90" y="56" width="13" height="16" fill="#d8d6d2"/>
 <rect x="80" y="60" width="9" height="12" fill="#9c6d5a"/>
 <rect x="0" y="72" width="121" height="28" fill="#b9bcb8"/>
 <rect x="80" y="74" width="41" height="2" fill="#d3d6d3"/>
 <rect x="39" y="34" width="8" height="13" rx="3" fill="#b98f3a"/><rect x="37" y="36" width="4" height="8" fill="#7a6a58"/>
 <!-- person -->
 <path d="M27 100 C28 70 34 42 58 40 C82 42 84 74 86 100Z" fill="#2a1f1c"/>
 <ellipse cx="56" cy="72" rx="18" ry="20" fill="#c9a392"/>
 <path d="M36 68 C36 48 76 48 76 68 C68 58 46 58 36 68Z" fill="#2a1f1c"/>
 <path d="M36 76 C46 70 66 70 75 76 L73 94 C66 102 46 102 39 94Z" fill="#f1dedb"/><ellipse cx="47" cy="69.5" rx="3" ry="1.3" fill="#3a2a26"/><ellipse cx="65" cy="69.5" rx="3" ry="1.3" fill="#3a2a26"/>
 <rect x="20" y="97" width="76" height="3" fill="#20242c"/>
 </g>
</svg>
<div class="t nm" style="left:776px;top:500.4px">莊紫棠Grace</div>
<div class="abs" style="left:869.5px;top:420.5px;width:13px;height:13px;border-radius:50%;background:rgba(32,33,36,0.35)"></div><svg class="abs" style="left:871px;top:422px" width="10" height="10" viewBox="0 0 10 10"><g fill="none" stroke="#e8eaed" stroke-width="0.9"><rect x="3.8" y="1.2" width="2.4" height="4.6" rx="1.2" fill="#e8eaed"/><path d="M2.2 4.8 A2.8 2.8 0 0 0 7.8 4.8 M5 7.6 V9"/><path d="M1.4 1.2 L8.8 8.8" stroke-width="1"/></g></svg>

<!-- tile 8 : letterboxed office -->
<div class="abs" style="left:895px;top:415px;width:121px;height:100px;border-radius:5px;background:#3c4043"></div>
<svg class="abs" style="left:895px;top:431px" width="121" height="68" viewBox="0 0 121 68">
 <g filter="url(#b1)">
 <rect width="121" height="68" fill="#b3b7ac"/>
 <rect x="0" y="0" width="19" height="68" fill="#a9ada3"/>
 <rect x="0" y="0" width="16" height="14" fill="#e0e2e2"/>
 <rect x="24" y="0" width="33" height="12" fill="#e3e4e2"/>
 <rect x="62" y="0" width="18" height="5" fill="#ecedec"/>
 <rect x="19" y="0" width="1.2" height="68" fill="#8b8f86"/>
 <rect x="87" y="0" width="1.2" height="68" fill="#8b8f86"/>
 <rect x="60" y="28" width="61" height="1.5" fill="#959a90"/>
 <rect x="96" y="3" width="22" height="17" fill="#cfd2cc"/><rect x="98" y="5" width="5" height="13" fill="#a3a89f"/><rect x="105" y="5" width="5" height="13" fill="#a3a89f"/><rect x="112" y="5" width="5" height="13" fill="#a3a89f"/>
 <rect x="115" y="30" width="1" height="38" fill="#8b8f86"/>
 <!-- person -->
 <path d="M2 68 C6 60 20 56 40 57 C60 56 76 60 80 68Z" fill="#e9e7e0"/>
 <path d="M16 68 C13 40 17 12 39 11 C60 12 62 40 58 68Z" fill="#241d1c"/>
 <ellipse cx="37.5" cy="46" rx="14.5" ry="17" fill="#c9a795"/><path d="M26 68 C28 60 48 60 50 68Z" fill="#c9a795"/>
 <path d="M20 44 C18 20 58 20 56 44 C52 34 46 32 38 34 C30 33 24 36 20 44Z" fill="#241d1c"/>
 <path d="M22 41 h13 v9 h-13z M40 41 h13 v9 h-13z" fill="none" stroke="#4c4444" stroke-width="1"/>
 <rect x="13" y="36" width="6.5" height="13" rx="3" fill="#3b8be6"/><rect x="54" y="35" width="6.5" height="13" rx="3" fill="#3b8be6"/>
 <path d="M15 48 C10 56 14 62 20 62" fill="none" stroke="#f2f2f2" stroke-width="1"/>
 </g>
</svg>
<div class="t nm" style="left:903px;top:500.4px">桃園市國中英語輔導團</div>
<div class="abs" style="left:996.5px;top:420.5px;width:13px;height:13px;border-radius:50%;background:rgba(32,33,36,0.35)"></div><svg class="abs" style="left:998px;top:422px" width="10" height="10" viewBox="0 0 10 10"><g fill="none" stroke="#e8eaed" stroke-width="0.9"><rect x="3.8" y="1.2" width="2.4" height="4.6" rx="1.2" fill="#e8eaed"/><path d="M2.2 4.8 A2.8 2.8 0 0 0 7.8 4.8 M5 7.6 V9"/><path d="M1.4 1.2 L8.8 8.8" stroke-width="1"/></g></svg>

<!-- ===== Meet bottom bar ===== -->
<div class="t" style="left:12.6px;top:531.4px;font-size:7.7px;font-weight:bold;color:#e8eaed"><span style="font-weight:normal;font-size:7.3px;color:#cfd1d4">下午</span>1:35</div>
<div class="abs" style="left:48.2px;top:530.8px;width:1px;height:8.5px;background:#80868b"></div>
<div class="t" style="left:55.8px;top:531.3px;font-size:8.25px;font-weight:bold;color:#e8eaed">xcq-fiev-roc</div>

<div class="abs" style="left:392px;top:525px;width:35px;height:20.5px;border-radius:10.5px;background:#3c4043"></div>
<svg class="abs" style="left:396.5px;top:532.5px" width="7" height="5" viewBox="0 0 7 5"><path d="M1 4 L3.5 1.4 L6 4" fill="none" stroke="#aeb2b7" stroke-width="1.1"/></svg>
<div class="abs" style="left:405.6px;top:524.8px;width:21px;height:21px;border-radius:50%;background:#ea4335"></div>
<svg class="abs" style="left:411px;top:530px" width="10" height="11" viewBox="0 0 10 11"><g fill="none" stroke="#fff" stroke-width="0.9"><rect x="3.8" y="1.2" width="2.4" height="5" rx="1.2" fill="#fff"/><path d="M2.2 5 A2.8 2.8 0 0 0 7.8 5 M5 8 V9.8"/><path d="M1.2 1.2 L8.8 9.6" stroke-width="1"/></g></svg>
<div class="abs" style="left:431.5px;top:525px;width:34px;height:20.5px;border-radius:10.5px;background:#3c4043"></div>
<svg class="abs" style="left:436px;top:532.5px" width="7" height="5" viewBox="0 0 7 5"><path d="M1 4 L3.5 1.4 L6 4" fill="none" stroke="#aeb2b7" stroke-width="1.1"/></svg>
<svg class="abs" style="left:449px;top:530.5px" width="11" height="9" viewBox="0 0 11 9"><rect x="1" y="1.5" width="6.2" height="6" rx="1" fill="none" stroke="#e8eaed" stroke-width="1.1"/><path d="M7.6 3.6 L10 2.2 V6.8 L7.6 5.4Z" fill="#e8eaed"/></svg>

<div class="abs cb" style="left:470.5px"></div>
<svg class="abs" style="left:475px;top:530.5px" width="11" height="9" viewBox="0 0 11 9"><rect x="0.8" y="0.8" width="9.4" height="7.4" rx="1" fill="none" stroke="#e8eaed" stroke-width="1.1"/><path d="M2.6 3.6 H4.8 V5.4 H2.6Z M6.2 3.6 H8.4 V5.4 H6.2Z" fill="none" stroke="#e8eaed" stroke-width="0.8"/></svg>
<div class="abs cb" style="left:497px"></div>
<svg class="abs" style="left:502px;top:529.5px" width="11" height="11" viewBox="0 0 11 11"><circle cx="5.5" cy="5.5" r="4.5" fill="none" stroke="#e8eaed" stroke-width="1.1"/><circle cx="3.8" cy="4.2" r="0.8" fill="#e8eaed"/><circle cx="7.2" cy="4.2" r="0.8" fill="#e8eaed"/><path d="M3 6.2 H8 A2.5 2.5 0 0 1 3 6.2Z" fill="#e8eaed"/></svg>
<div class="abs cb" style="left:524px"></div>
<svg class="abs" style="left:528.5px;top:530px" width="12" height="10" viewBox="0 0 12 10"><rect x="0.8" y="0.8" width="10.4" height="8.4" rx="1" fill="none" stroke="#e8eaed" stroke-width="1.2"/><path d="M6 2.8 L8.4 5.2 H6.9 V7.2 H5.1 V5.2 H3.6Z" fill="#e8eaed"/></svg>
<div class="abs cb" style="left:550.5px"></div>
<svg class="abs" style="left:555.5px;top:529px" width="11" height="12" viewBox="0 0 11 12"><path d="M2.2 6.4 V2.8 M4.2 5.6 V1.4 M6.2 5.6 V1.4 M8.2 6 V2.6 M2.2 6 C0.8 5 0.6 6.4 1.4 7.6 L3 10 C3.6 11 5 11.2 6 11.2 C8 11.2 9 10 9 8.4 V6" fill="none" stroke="#e8eaed" stroke-width="1.1" stroke-linecap="round" stroke-linejoin="round"/></svg>
<div class="abs cb" style="left:577px"></div>
<div class="abs" style="left:586px;top:530.5px;width:2px;height:2px;border-radius:50%;background:#e8eaed;box-shadow:0 3.5px 0 #e8eaed,0 7px 0 #e8eaed"></div>
<div class="abs" style="left:602.5px;top:525px;width:29px;height:20.5px;border-radius:10.5px;background:#ea4335"></div>
<svg class="abs" style="left:610.5px;top:532px" width="13" height="7" viewBox="0 0 13 7"><path d="M0.8 4.6 C3 1.2 10 1.2 12.2 4.6 L10.8 6 L8.8 4.8 V3.4 C7.4 2.9 5.6 2.9 4.2 3.4 V4.8 L2.2 6Z" fill="#fff"/></svg>

<svg class="abs" style="left:897px;top:529px" width="12" height="12" viewBox="0 0 12 12"><circle cx="6" cy="6" r="4.8" fill="none" stroke="#e8eaed" stroke-width="1.1"/><path d="M6 5.4 V8.6" stroke="#e8eaed" stroke-width="1.2"/><circle cx="6" cy="3.6" r="0.8" fill="#e8eaed"/></svg>
<svg class="abs" style="left:921.5px;top:529.5px" width="14" height="11" viewBox="0 0 14 11"><g fill="none" stroke="#e8eaed" stroke-width="1.1"><circle cx="5" cy="3.2" r="2"/><path d="M1 9.8 V8.6 C1 7 3.2 6.4 5 6.4 C6.8 6.4 9 7 9 8.6 V9.8Z"/><path d="M8.6 1.4 A2 2 0 0 1 8.6 5 M10.6 6.8 C12 7.2 13 7.8 13 8.8 V9.8 H11"/></g></svg>
<div class="abs" style="left:929.5px;top:517.5px;width:9px;height:9px;border-radius:50%;background:#5f6368"></div>
<div class="t" style="left:932.5px;top:519.5px;font-size:5px;font-weight:bold;color:#e8eaed">9</div>
<svg class="abs" style="left:947.5px;top:529.5px" width="12" height="12" viewBox="0 0 12 12"><path d="M1 1 H11 V8.6 H3.4 L1 11Z" fill="none" stroke="#e8eaed" stroke-width="1.1" stroke-linejoin="round"/><path d="M3 3.6 H9 M3 6 H7.6" stroke="#e8eaed" stroke-width="0.9"/></svg>
<svg class="abs" style="left:973.5px;top:529px" width="12" height="12" viewBox="0 0 12 12"><g fill="none" stroke="#e8eaed" stroke-width="1.1" stroke-linejoin="round"><path d="M6 1 L8.6 5 H3.4Z"/><rect x="1" y="7" width="3.8" height="3.8"/><circle cx="9" cy="8.9" r="2"/></g></svg>
<div class="abs" style="left:997.5px;top:513.3px;width:23.3px;height:39.6px;background:#363c48;border:1px solid #565d6b;border-bottom:0"></div>
<svg class="abs" style="left:1003px;top:518px" width="12" height="12" viewBox="0 0 12 12"><path d="M1.5 10.5 L2.2 7.8 L8.6 1.4 L10.6 3.4 L4.2 9.8Z" fill="none" stroke="#fff" stroke-width="1.1" stroke-linejoin="round"/></svg>
<div class="t" style="left:1001.5px;top:538px;font-size:12px;font-weight:bold;color:#fff">Hi</div>

<!-- ===== Windows taskbar ===== -->
<div class="abs" style="left:0;top:554px;width:1024px;height:22px;background:linear-gradient(90deg,#1d1d1d 0,#1d1d1d 55%,#2a2a2a 62%,#1b1b1b 75%)"></div>
<svg class="abs" style="left:8px;top:560.5px" width="10" height="10" viewBox="0 0 10 10"><path d="M0 1.4 L4.2 0.8 V4.7 H0Z M4.8 0.7 L10 0 V4.7 H4.8Z M0 5.3 H4.2 V9.2 L0 8.6Z M4.8 5.3 H10 V10 L4.8 9.3Z" fill="#fff"/></svg>
<div class="abs" style="left:26px;top:555px;width:153px;height:21px;background:#f1f1f1"></div>
<svg class="abs" style="left:32px;top:561px" width="9" height="9" viewBox="0 0 9 9"><circle cx="5.4" cy="3.6" r="2.6" fill="none" stroke="#333" stroke-width="0.9"/><path d="M3.5 5.5 L0.8 8.2" stroke="#333" stroke-width="1"/></svg>
<div class="t" style="left:47px;top:561.2px;font-size:8.4px;color:#3a3a3a;letter-spacing:0.15px">在這裡輸入文字來搜尋</div>
<svg class="abs" style="left:141px;top:555px" width="38" height="21" viewBox="0 0 38 21"><g><path d="M3 5 C8 6 12 9 15 13 L11 14 C8 11 5 8 3 5Z" fill="#6a3f86"/><path d="M4 20 C8 14 14 10 19 10 C21 10 22 12 20 14 C16 18 10 20 4 20Z" fill="#1f8f7a"/><path d="M19 10 L25 8 L20 12Z" fill="#2a2a2a"/><circle cx="28" cy="8" r="4" fill="#e3c93a"/><path d="M28 12 C27 15 29 18 30 21 H33 C31 18 30 15 30 12Z" fill="#3fa35a"/><path d="M30 16 C33 14 36 15 37 17 C35 19 32 19 30 18Z" fill="#3fa35a"/></g></svg>
<svg class="abs" style="left:187px;top:560px" width="11" height="10" viewBox="0 0 11 10"><g fill="none" stroke="#fff" stroke-width="1"><rect x="2.5" y="2.5" width="5" height="5"/><path d="M0.5 1.5 V8.5 M9.5 1.5 V3.4 M9.5 6.6 V8.5 M8.6 5 H10.6"/></g></svg>
<div class="abs" style="left:213px;top:560px;width:11px;height:10px;background:#5d7fb0;border-radius:1px"></div>
<div class="abs" style="left:215px;top:561.5px;width:7px;height:7px;background:#d9dde6"></div>
<div class="abs" style="left:217px;top:562.5px;width:0;height:0;border-left:4px solid #e98b2c;border-top:2.5px solid transparent;border-bottom:2.5px solid transparent"></div>
<div class="abs" style="left:239.5px;top:559.5px;width:12px;height:11.5px;background:#f5c518"></div>
<div class="abs" style="left:246.5px;top:566px;width:5px;height:5px;background:linear-gradient(135deg,#5a4508 50%,#f5c518 50%)"></div>
<div class="abs" style="left:266.5px;top:559px;width:9.5px;height:12.5px;background:#4d6f97;border-radius:1px"></div>
<div class="abs" style="left:268px;top:560.5px;width:6.5px;height:3px;background:#b9d3ea"></div>
<div class="abs" style="left:268px;top:565px;width:2.6px;height:2.2px;background:#d7e2ee;box-shadow:3.8px 0 0 #d7e2ee,0 3.2px 0 #d7e2ee,3.8px 3.2px 0 #9fd0f2"></div>
<div class="abs" style="left:291.5px;top:559px;width:12.5px;height:12.5px;background:#06c755;border-radius:3px"></div>
<div class="abs" style="left:293.5px;top:561.5px;width:8.5px;height:6.5px;background:#fff;border-radius:3.5px"></div>
<div class="t" style="left:294.6px;top:563.2px;font-size:3.2px;font-weight:bold;color:#06c755">LINE</div>
<div class="abs" style="left:318px;top:560px;width:12px;height:10px;background:#f2c94c;border-radius:1px"></div>
<div class="abs" style="left:318px;top:559px;width:5px;height:2px;background:#e0a91e"></div>
<div class="abs" style="left:320px;top:565px;width:8px;height:3.5px;background:#4a9be0"></div>
<div class="abs" style="left:344px;top:559px;width:12.5px;height:12.5px;border-radius:50%;background:conic-gradient(from -60deg,#ea4335 0 120deg,#fbbc04 120deg 240deg,#34a853 240deg 360deg)"></div>
<div class="abs" style="left:347.2px;top:562.2px;width:6px;height:6px;border-radius:50%;background:#4285f4;border:1px solid #fff"></div>
<div class="abs" style="left:351px;top:566px;width:5.5px;height:5.5px;border-radius:50%;background:#c9a28c"></div>
<div class="abs" style="left:369.5px;top:559px;width:12.5px;height:12.5px;border-radius:50%;background:#26242a;border:1px solid #d6d6d6"></div>
<div class="abs" style="left:373px;top:562.5px;width:5.5px;height:5.5px;border-radius:50%;border:1px solid #cfcfcf"></div>
<div class="abs" style="left:395.5px;top:559.5px;width:12px;height:11.5px;background:#1d6f42;border-radius:1px"></div>
<div class="abs" style="left:403px;top:560.5px;width:4px;height:9.5px;background:#b7dcc4"></div>
<div class="t" style="left:397px;top:561.3px;font-size:8px;font-weight:bold;color:#fff">x</div>
<div class="abs" style="left:287px;top:574.2px;width:20px;height:1.8px;background:#a6cfec"></div>
<div class="abs" style="left:313px;top:574.2px;width:21px;height:1.8px;background:#a6cfec"></div>
<div class="abs" style="left:339px;top:574.2px;width:21px;height:1.8px;background:#a6cfec"></div>
<div class="abs" style="left:365px;top:574.2px;width:21px;height:1.8px;background:#a6cfec"></div>
<div class="abs" style="left:391px;top:574.2px;width:21px;height:1.8px;background:#a6cfec"></div>
<!-- tray -->
<div class="abs" style="left:806px;top:561.5px;width:13px;height:7.5px;border-radius:1.5px;background:linear-gradient(100deg,#1c3c7c 0 38%,#fff 38% 62%,#c8202c 62%)"></div>
<div class="t" style="left:823.5px;top:561px;font-size:7.6px;color:#fff">結果</div>
<svg class="abs" style="left:851px;top:562px" width="8" height="6" viewBox="0 0 8 6"><path d="M1 4.8 L4 1.6 L7 4.8" fill="none" stroke="#fff" stroke-width="1"/></svg>
<svg class="abs" style="left:863px;top:559.5px" width="60" height="12" viewBox="0 0 60 12"><g fill="none" stroke="#fff" stroke-width="0.9"><circle cx="5.5" cy="4.2" r="2.4"/><path d="M2 10 H9 V7.6 H2Z"/><rect x="16.4" y="1.2" width="3.2" height="6" rx="1.6" fill="#fff"/><path d="M14.8 6 A3.2 3.2 0 0 0 21.2 6 M18 9.2 V11"/><rect x="27" y="2" width="8" height="7" /><path d="M29 4 H33 V7 H29Z"/><path d="M40 4.6 H41.8 L44 2.6 V9.4 L41.8 7.4 H40Z" fill="#fff"/><path d="M45.4 4 A2.4 2.4 0 0 1 45.4 8 M46.8 2.6 A4.4 4.4 0 0 1 46.8 9.4"/><rect x="52" y="2.6" width="7" height="5.4"/><path d="M53 10 L55.5 8 M51 4 V9"/></g><circle cx="34.5" cy="9" r="1.8" fill="#3c8fe0"/></svg>
<div class="t" style="left:926.5px;top:560.5px;font-size:8.6px;color:#fff">中</div>
<div class="abs" style="left:942px;top:561px;width:8px;height:8px;background:#f2f2f2;border-radius:1px"></div>
<div class="abs" style="left:944px;top:563px;width:3px;height:3px;border-top:1px solid #222;border-right:1px solid #222"></div>
<div class="t" style="left:961.5px;top:556.5px;font-size:6.8px;color:#fff">下午 01:35</div>
<div class="t" style="left:961px;top:566.5px;font-size:6.8px;color:#fff">2024/6/17</div>
<svg class="abs" style="left:1001.5px;top:559.5px" width="12" height="12" viewBox="0 0 12 12"><path d="M1 1 H9.6 V7.6 H4 L1 10Z" fill="none" stroke="#fff" stroke-width="0.9"/><path d="M2.8 3.2 H7.8 M2.8 5.2 H7.8" stroke="#fff" stroke-width="0.7"/></svg>
<div class="abs" style="left:1006.5px;top:565.5px;width:7px;height:7px;border-radius:50%;background:#1d1d1d;border:0.8px solid #fff"></div>
<div class="t" style="left:1008.6px;top:567px;font-size:4.6px;color:#fff">3</div>
<!-- yellow share border -->
<div class="abs yb" style="left:0;top:0;width:1024px;height:1.7px"></div>
<div class="abs yb" style="left:0;top:0;width:1.4px;height:64px"></div>
<div class="abs" style="left:0;top:64px;width:1.3px;height:490px;background:#9a8a36"></div>
<div class="abs yb" style="left:1021.5px;top:0;width:2.5px;height:64px"></div>
<div class="abs" style="left:1021.5px;top:64px;width:2.5px;height:490px;background:#85752c"></div>
<div class="abs" style="left:0;top:552.6px;width:1024px;height:1.4px;background:#b3a23a"></div>
</body>
</html>
